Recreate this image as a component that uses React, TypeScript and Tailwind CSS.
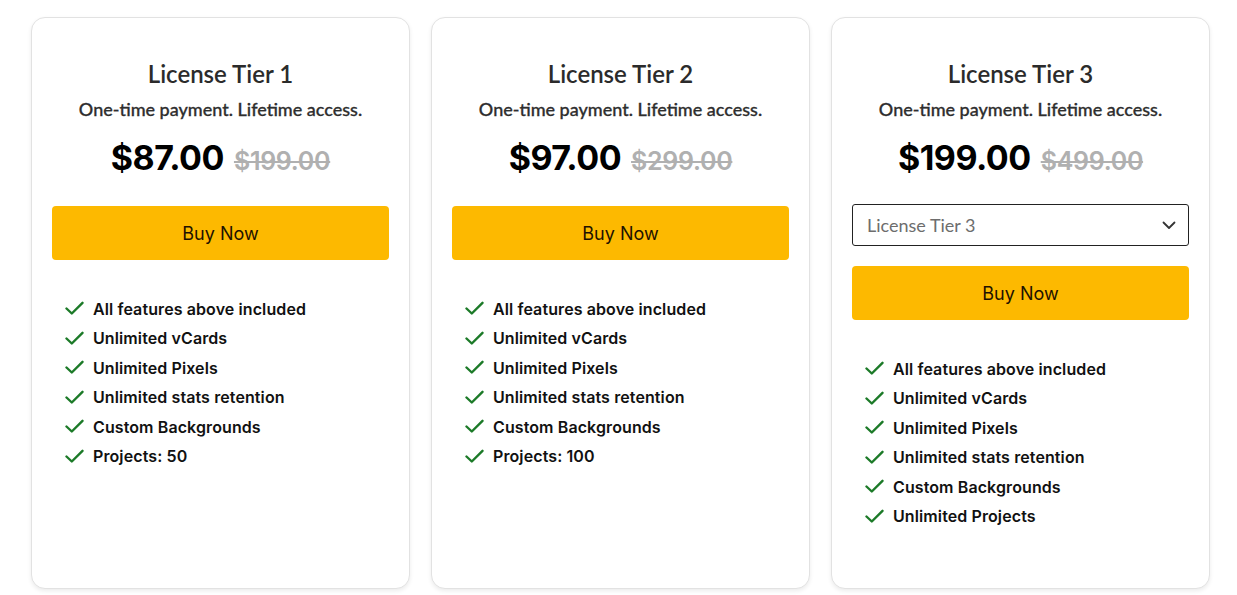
import React from "react";

const Check = () => (
  <svg width="19" height="15" viewBox="0 0 19 15" className="shrink-0">
    <path d="M1.5 7.5 L6.8 12.5 L17.5 1.8" fill="none" stroke="#1c7a28" strokeWidth="2.4" strokeLinecap="round" strokeLinejoin="round" />
  </svg>
);

type Tier = { name: string; price: string; old: string; features: string[]; select?: boolean };

const base = ["All features above included", "Unlimited vCards", "Unlimited Pixels", "Unlimited stats retention", "Custom Backgrounds"];

const tiers: Tier[] = [
  { name: "License Tier 1", price: "$87.00", old: "$199.00", features: [...base, "Projects: 50"] },
  { name: "License Tier 2", price: "$97.00", old: "$299.00", features: [...base, "Projects: 100"] },
  { name: "License Tier 3", price: "$199.00", old: "$499.00", features: [...base, "Unlimited Projects"], select: true },
];

function Card({ t }: { t: Tier }) {
  return (
    <div className="w-[379px] h-[572px] bg-white border border-[#e2e2e2] rounded-[14px] shadow-[0_2px_4px_rgba(0,0,0,0.08)] px-5 pt-[40px] flex flex-col">
      <h2 className="text-center text-[24px] leading-[32px] font-semibold text-[#2b2b2b] font-['Lato',sans-serif]">{t.name}</h2>
      <p className="text-center text-[18px] leading-[24px] mt-[7px] font-medium text-[#2e2e2e] font-['Lato',sans-serif] [-webkit-text-stroke:0.3px_#2e2e2e]">
        One-time payment. Lifetime access.
      </p>
      <div className="flex items-baseline justify-center gap-[10px] mt-[14px] font-['Inter',sans-serif]">
        <span className="text-[34px] leading-[46px] font-bold text-black tracking-[-0.5px]">{t.price}</span>
        <span className="text-[25px] leading-[32px] font-semibold text-[#b0b0b0] line-through tracking-[-0.3px]">{t.old}</span>
      </div>
      {t.select && (
        <div className="mt-[23px] h-[42px] border border-[#222] rounded-[3px] flex items-center justify-between pl-[14px] pr-[12px] font-['Lato',sans-serif] text-[18px] text-[#6d6d6d]">
          <span>{t.name}</span>
          <svg width="14" height="9" viewBox="0 0 14 9">
            <path d="M1.5 1.5 L7 7 L12.5 1.5" fill="none" stroke="#333" strokeWidth="1.8" strokeLinecap="round" strokeLinejoin="round" />
          </svg>
        </div>
      )}
      <button
        className={`${t.select ? "mt-[20px]" : "mt-[25px]"} h-[54px] w-full rounded-[4px] bg-[#fdb900] text-[18px] text-[#1e1200] font-['Inter',sans-serif]`}
      >
        Buy Now
      </button>
      <ul className="mt-[37px] pl-[13px] flex flex-col gap-[6.6px] font-['Inter',sans-serif]">
        {t.features.map((f) => (
          <li key={f} className="flex items-center gap-[9px] h-[23px] text-[16px] font-semibold text-[#111] tracking-[0.1px]">
            <Check />
            <span>{f}</span>
          </li>
        ))}
      </ul>
    </div>
  );
}

export default function App() {
  return (
    <div className="w-[1237px] h-[595px] bg-white flex gap-[21px] pl-[31px] pt-[17px]">
      {tiers.map((t) => (
        <Card key={t.name} t={t} />
      ))}
    </div>
  );
}
